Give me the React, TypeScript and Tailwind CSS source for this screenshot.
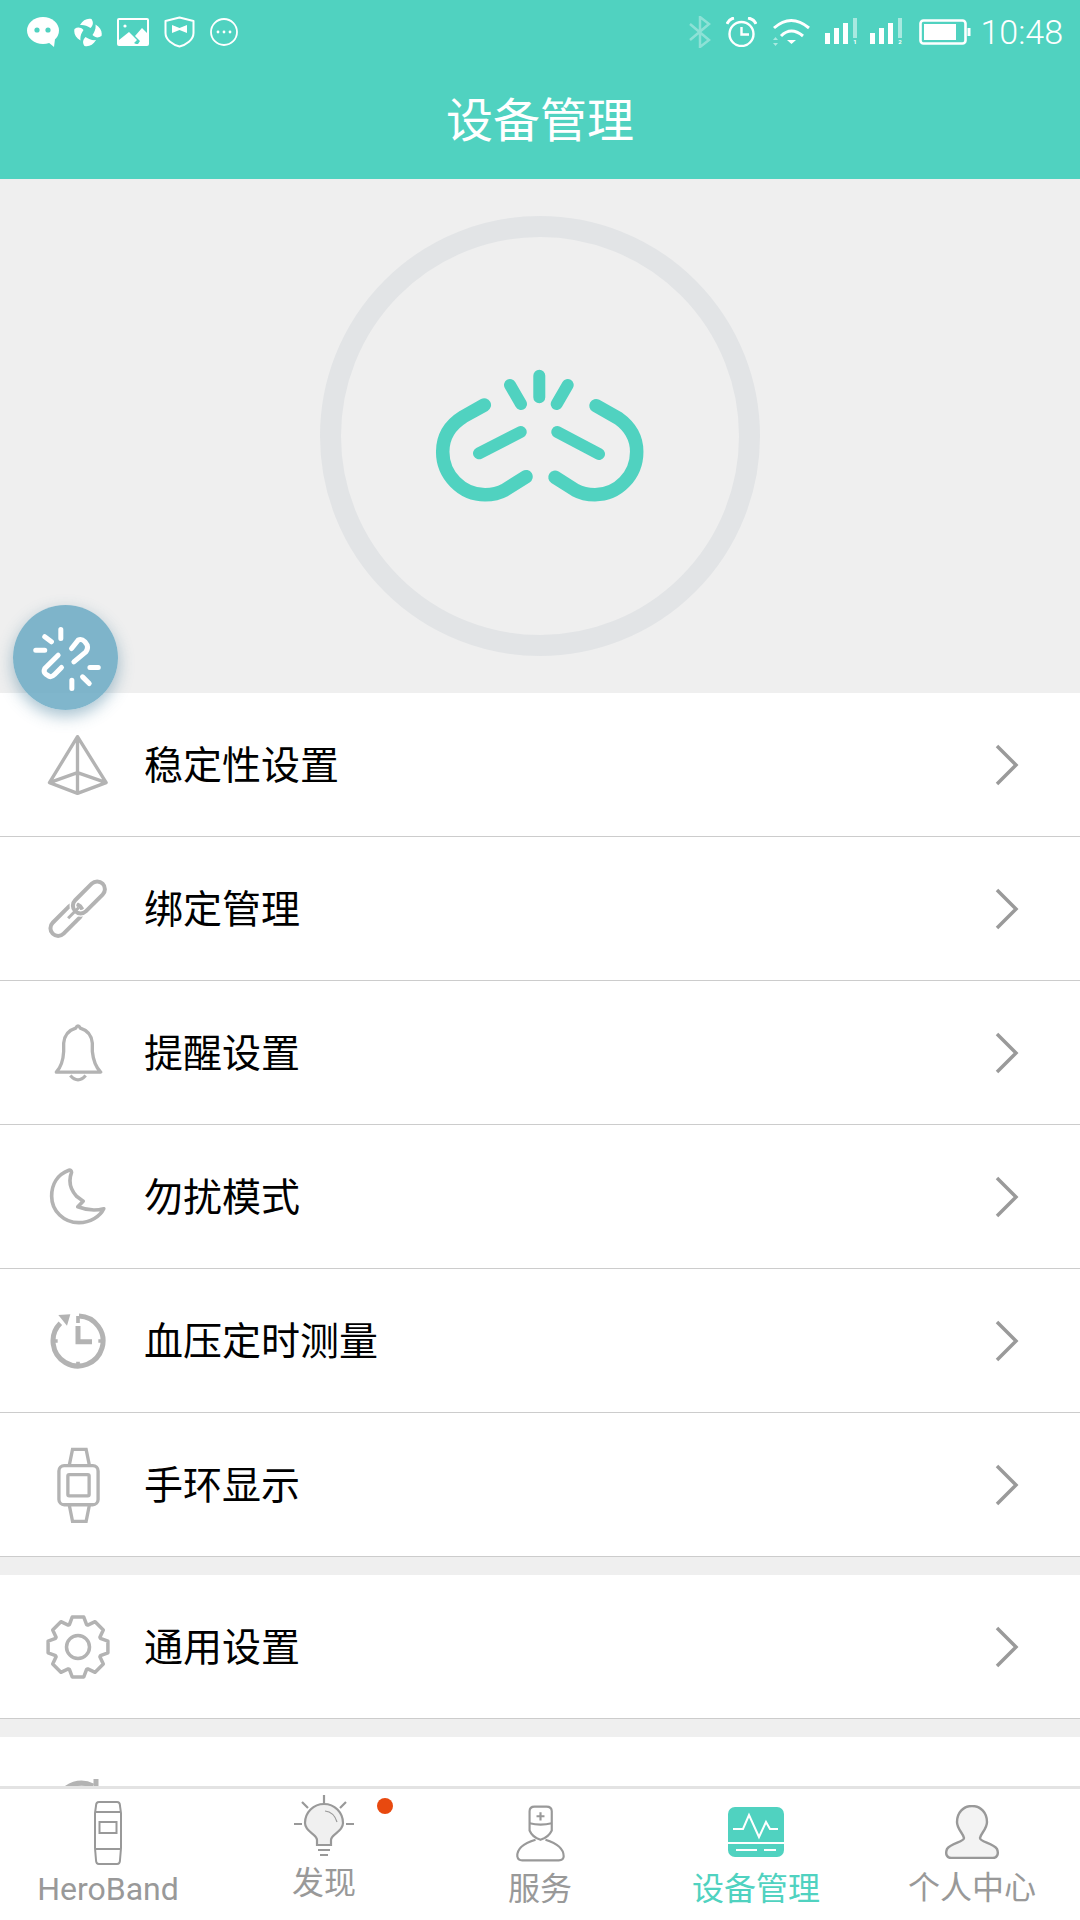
import React from 'react';

const GREY = '#b3b3b3';

const gearPath = () => {
    const pts: string[] = [];
    for (let i = 0; i < 8; i++) {
        const a = i * 45 - 90;
        [[-21, 24], [-11, 30.5], [11, 30.5], [21, 24]].forEach(([d, r]) => {
            const t = ((a + d) * Math.PI) / 180;
            pts.push(`${(34 + r * Math.cos(t)).toFixed(1)} ${(34 + r * Math.sin(t)).toFixed(1)}`);
        });
    }
    return 'M' + pts.join(' L') + ' Z';
};

const Pyramid = () => (
    <svg width="62" height="60" viewBox="145 435 185 180" fill="none" stroke={GREY} strokeWidth="10" strokeLinejoin="round">
        <path d="M236 440 L152 578 L236 610 L322 578 Z M152 578 L236 548 L322 578 M236 440 V610" />
    </svg>
);

const Chain = () => (
    <svg width="62" height="62" viewBox="145 865 185 185" fill="none" stroke={GREY} strokeWidth="12">
        <rect x="145" y="967" width="116" height="46" rx="23" transform="rotate(-45 203 990)" />
        <rect x="212" y="900" width="116" height="46" rx="23" transform="rotate(-45 270 923)" stroke="white" strokeWidth="20" />
        <rect x="212" y="900" width="116" height="46" rx="23" transform="rotate(-45 270 923)" />
        <path d="M208 985 L240 953" strokeWidth="9" />
    </svg>
);

const Bell = () => (
    <svg width="50" height="62" viewBox="160 62 150 185" fill="none" stroke={GREY} strokeWidth="10" strokeLinejoin="round">
        <path d="M170 212 Q190 190 192 150 L192 125 Q195 90 228 80 Q235 66 242 80 Q275 90 278 125 L278 150 Q282 190 303 212 Z" />
        <path d="M212 222 Q235 248 258 222" />
    </svg>
);

const Moon = () => (
    <svg width="58" height="58" viewBox="145 505 175 175" fill="none" stroke={GREY} strokeWidth="11" strokeLinejoin="round">
        <path d="M205 512 C170 525 153 555 153 590 C153 635 190 670 235 670 C270 670 300 650 310 628 C295 632 265 635 232 622 L248 605 L228 590 C205 565 205 540 213 518 Q212 510 205 512 Z" />
    </svg>
);

const Clock = () => (
    <svg width="60" height="60" viewBox="55 60 180 180" fill="none" stroke={GREY}>
        <path d="M148 75 A75 75 0 1 1 92 97" strokeWidth="15" />
        <path d="M86 72 L122 70 L112 104 Z" fill={GREY} stroke="none" />
        <path d="M145 105 V152 H187" strokeWidth="15" />
        <path d="M145 75 V96 M145 212 V225 M72 150 H84 M206 150 H220" strokeWidth="11" />
    </svg>
);

const Watch = () => (
    <svg width="47" height="78" viewBox="75 465 140 235" fill="none" stroke={GREY} strokeWidth="10">
        <rect x="86" y="524" width="118" height="118" rx="16" />
        <rect x="113" y="551" width="64" height="64" rx="4" />
        <path d="M117 524 L127 475 H168 L178 524 M117 642 L127 692 H168 L178 642" />
    </svg>
);

const Gear = () => (
    <svg width="68" height="68" viewBox="0 0 68 68" fill="none" stroke={GREY} strokeWidth="3.5" strokeLinejoin="round">
        <path d={gearPath()} />
        <circle cx="34" cy="34" r="11.5" />
    </svg>
);

const Partial = () => (
    <svg width="68" height="60" viewBox="0 0 68 60" fill="none" stroke={GREY} strokeWidth="5">
        <path d="M21 10 Q35 0 49 7" />
        <path d="M52 0 V10" strokeLinecap="round" />
    </svg>
);

const Chevron = () => (
    <svg width="26" height="44" viewBox="0 0 26 44" fill="none" stroke="#9a9a9a" strokeWidth="3.5">
        <path d="M3 3 L22 22 L3 41" />
    </svg>
);

const Row = ({ icon, label }: { icon: React.ReactNode; label?: string }) => (
    <div className="flex h-[144px] shrink-0 items-center border-b border-[#cccccc] bg-white pl-[44px] pr-[60px]">
        <div className="flex w-[68px] items-center justify-center">{icon}</div>
        <span className="ml-[32px] flex-1 pt-[2px] text-[39px] leading-[52px] text-black">{label}</span>
        {label && <Chevron />}
    </div>
);

const WeChat = () => (
    <svg width="32" height="30" viewBox="0 0 32 30" fill="white">
        <ellipse cx="16" cy="13.5" rx="16" ry="13.5" />
        <path d="M21 25 L27 30 L28 22 Z" />
        <circle cx="10" cy="13" r="2.6" fill="#50d2c0" />
        <circle cx="21" cy="13" r="2.6" fill="#50d2c0" />
    </svg>
);

const PETAL = 'M6 7 C9 2 13 0 17.5 1 C19.5 4 19.5 7 16.5 10 C13 7.5 9.5 6.5 6 7 Z';

const Shutter = () => (
    <svg width="28" height="29" viewBox="0 0 28 29" fill="white">
        <path d={PETAL} />
        <path d={PETAL} transform="rotate(90 14 14.5)" />
        <path d={PETAL} transform="rotate(180 14 14.5)" />
        <path d={PETAL} transform="rotate(270 14 14.5)" />
    </svg>
);

const Picture = () => (
    <svg width="32" height="28" viewBox="0 0 32 28">
        <rect x="1" y="1" width="30" height="26" rx="1" fill="none" stroke="white" strokeWidth="2" />
        <path d="M2 26 V22 L12 14 L20 22 L17 25 L19 26 Z M18 18 L25 10 L30 15 V26 H21 L23 23 Z" fill="white" />
        <circle cx="8" cy="8" r="1.6" fill="white" />
    </svg>
);

const Shield = () => (
    <svg width="31" height="32" viewBox="0 0 31 32">
        <path d="M15.5 1.5 L29.5 5 V17 C29.5 24 22 29 15.5 30.5 C9 29 1.5 24 1.5 17 V5 Z" fill="none" stroke="white" strokeWidth="2" strokeLinejoin="round" />
        <path d="M8 9 L15.5 12 L23 9 V17 L15.5 14 L8 17 Z" fill="white" />
    </svg>
);

const MoreDots = () => (
    <svg width="28" height="28" viewBox="0 0 28 28">
        <circle cx="14" cy="14" r="13" fill="none" stroke="white" strokeWidth="1.8" />
        <circle cx="8" cy="14" r="1.4" fill="white" />
        <circle cx="14" cy="14" r="1.4" fill="white" />
        <circle cx="20" cy="14" r="1.4" fill="white" />
    </svg>
);

const Bluetooth = () => (
    <svg width="22" height="32" viewBox="0 0 22 32" fill="none" stroke="white" strokeWidth="2.5" opacity="0.35">
        <path d="M1 8 L20 24 L11 31 V1 L20 8 L1 24" />
    </svg>
);

const Alarm = () => (
    <svg width="31" height="30" viewBox="0 0 31 30" fill="none" stroke="white" strokeWidth="2.4">
        <circle cx="15.5" cy="17" r="12" />
        <path d="M15.5 10 V17.5 H23" />
        <path d="M1 7 Q3 2 8 1 M22 1 Q28 2 30 7" strokeWidth="3" />
    </svg>
);

const Wifi = () => (
    <svg width="37" height="28" viewBox="0 0 37 28" fill="none" stroke="white" strokeWidth="3">
        <path d="M1 10 Q18 -5 36 10" />
        <path d="M8 18 Q18 8 30 18" />
        <path d="M14 22 H23 L18.5 26 Z" fill="white" stroke="none" />
        <path d="M0 22 H5 L2.5 19 Z M0 25 H5 L2.5 28 Z" fill="white" stroke="none" opacity="0.5" />
    </svg>
);

const Signal = ({ sim }: { sim: string }) => (
    <svg width="33" height="28" viewBox="0 0 33 28" fill="white">
        <rect x="0" y="15" width="5" height="11" />
        <rect x="9" y="10" width="5" height="16" />
        <rect x="18" y="5" width="5" height="21" />
        <rect x="28" y="0" width="4" height="20" opacity="0.5" />
        <text x="30" y="26" fontSize="6" textAnchor="middle" fontWeight="700">{sim}</text>
    </svg>
);

const Battery = () => (
    <svg width="52" height="26" viewBox="0 0 52 26">
        <rect x="1.5" y="1.5" width="45" height="23" rx="3" fill="none" stroke="white" strokeWidth="2.6" />
        <rect x="5" y="5" width="32" height="16" fill="white" />
        <rect x="48.5" y="9" width="3" height="8" fill="white" />
    </svg>
);

const Broken = () => (
    <svg width="220" height="144" viewBox="430 364 220 144" fill="none" stroke="#50d2c0" strokeWidth="13.5" strokeLinecap="round">
        <path d="M484.3 405 L463.3 416.7 C450 425 442.7 436.7 442.7 451.7 C442.7 475 461.7 494.7 485 494.7 C493.3 494.7 500 492.7 505 490 L526 476.7" />
        <path d="M596 405.7 L618.3 418.3 C630 426.7 636.7 438.3 636.7 451.7 C636.7 475 618.3 494.7 595 494.7 C586.7 494.7 580 492.7 575 490 L555 477.3" />
        <path d="M479 453.3 L520.7 432 M557.3 432 L599 454" strokeWidth="12" />
        <path d="M510 385 L521 404 M539.3 375.7 V397.3 M567.7 385 L556.7 404" strokeWidth="12" />
    </svg>
);

const FabLink = () => (
    <svg width="105" height="105" viewBox="40 45 314 314" fill="none" stroke="white" strokeWidth="15" strokeLinecap="round" strokeLinejoin="round">
        <path d="M108 180 H135 M135 140 L155 155 M183 118 V145 M270 232 H295 M248 260 L268 280 M216 270 V295" />
        <path d="M215 175 L235 150 Q245 145 255 155 L262 165 Q265 175 258 185 L222 215" />
        <path d="M175 195 L135 235 Q130 245 138 252 L148 258 Q155 262 165 252 L185 232" />
    </svg>
);

const NAV = '#999999';

const BandIcon = () => (
    <svg width="28" height="64" viewBox="0 0 28 64" fill="none" stroke={NAV} strokeWidth="2">
        <path d="M5 1 H23 Q26 1 26 5 L27 12 V47 L26 59 Q26 63 23 63 H5 Q2 63 2 59 L1 47 V12 L2 5 Q2 1 5 1 Z" />
        <path d="M1 11 H27 M1 48 H27" />
        <rect x="5.5" y="21" width="17" height="11" />
    </svg>
);

const BulbIcon = () => (
    <svg width="68" height="74" viewBox="0 0 68 74" fill="none" stroke={NAV} strokeWidth="2.2">
        <path d="M27 50 C27 44 15 42 15 33 A19 19 0 1 1 53 33 C53 42 41 44 41 50 L41 55 H27 Z" fill="#f0f0f0" />
        <path d="M35 21 Q44 22 47 32" strokeWidth="1.2" />
        <path d="M34 5 V13 M4 34 H12 M56 34 H64 M12 12 L18 18 M56 12 L50 18 M28 60 H40 M30 65 H38" />
    </svg>
);

const NurseIcon = () => (
    <svg width="53" height="62" viewBox="100 65 160 185" fill="none" stroke={NAV} strokeWidth="6.5">
        <path d="M147 130 V92 Q147 78 162 78 H198 Q214 78 214 92 V130" />
        <path d="M147 128 Q180 136 214 128" />
        <path d="M147 130 V150 Q155 170 180 178 Q205 170 214 150 V130" />
        <path d="M165 178 Q108 195 110 228 Q112 240 125 240 H235 Q250 240 250 228 Q250 195 195 178" />
        <path d="M180 95 V120 M168 107 H192" />
    </svg>
);

const DeviceIcon = () => (
    <svg width="56" height="50" viewBox="0 0 56 50" fill="none">
        <rect width="56" height="50" rx="7" fill="#50d2c0" />
        <path d="M5 22 H15 L21 8 L31 30 L38 15 L42 22 H50 M0 36 H56 M8 43 H29 M36 43 H48" stroke="white" strokeWidth="2" />
    </svg>
);

const PersonIcon = () => (
    <svg width="54" height="54" viewBox="0 0 54 54" fill="#f3f3f3" stroke={NAV} strokeWidth="2.4">
        <path d="M27 1 C36 1 42 8 42 17 C42 24 36 28 35 33 C35 37 48 38 52 44 C54 49 52 53 48 53 H6 C2 53 0 49 2 44 C6 38 19 37 19 33 C18 28 12 24 12 17 C12 8 18 1 27 1 Z" />
    </svg>
);

const App = () => {
    return (
        <div className="relative flex h-[1920px] w-[1080px] flex-col overflow-hidden bg-[#efefef] font-['Roboto','Noto_Sans_CJK_SC',sans-serif]">
            <header className="shrink-0 bg-[#50d2c0] text-white">
                <div className="flex h-[64px] items-center justify-between pl-[27px] pr-[17px]">
                    <div className="flex items-center gap-[15px]">
                        <WeChat />
                        <Shutter />
                        <Picture />
                        <Shield />
                        <MoreDots />
                    </div>
                    <div className="flex items-center">
                        <Bluetooth />
                        <div className="ml-[15px]"><Alarm /></div>
                        <div className="ml-[16px]"><Wifi /></div>
                        <div className="ml-[15px]"><Signal sim="1" /></div>
                        <div className="ml-[12px]"><Signal sim="2" /></div>
                        <div className="ml-[16px]"><Battery /></div>
                        <span className="ml-[9px] text-[34px] font-light leading-[40px]">10:48</span>
                    </div>
                </div>
                <h1 className="flex h-[115px] items-center justify-center text-[47px] font-normal">设备管理</h1>
            </header>

            <main className="flex min-h-0 flex-1 flex-col overflow-hidden">
                <section className="flex h-[514px] shrink-0 items-center justify-center">
                    <div className="flex h-[440px] w-[440px] items-center justify-center rounded-full border-[21px] border-[#e2e4e6]">
                        <Broken />
                    </div>
                </section>
                <Row icon={<Pyramid />} label="稳定性设置" />
                <Row icon={<Chain />} label="绑定管理" />
                <Row icon={<Bell />} label="提醒设置" />
                <Row icon={<Moon />} label="勿扰模式" />
                <Row icon={<Clock />} label="血压定时测量" />
                <Row icon={<Watch />} label="手环显示" />
                <div className="h-[18px] shrink-0" />
                <Row icon={<Gear />} label="通用设置" />
                <div className="h-[18px] shrink-0" />
                <Row icon={<Partial />} />
            </main>

            <nav className="grid h-[134px] shrink-0 grid-cols-5 border-t-[3px] border-[#e3e3e3] bg-white text-[32px] leading-[40px] text-[#999999]">
                <div className="flex flex-col items-center pt-[12px]">
                    <BandIcon />
                    <span className="mt-[4px]">HeroBand</span>
                </div>
                <div className="relative flex flex-col items-center pt-px">
                    <BulbIcon />
                    <span className="-mt-px">发现</span>
                    <span className="absolute left-[161px] top-[9px] h-[16px] w-[16px] rounded-full bg-[#e8490f]" />
                </div>
                <div className="flex flex-col items-center pt-[13px]">
                    <NurseIcon />
                    <span className="mt-[5px]">服务</span>
                </div>
                <div className="flex flex-col items-center pt-[18px]">
                    <DeviceIcon />
                    <span className="mt-[12px] text-[#50d2c0]">设备管理</span>
                </div>
                <div className="flex flex-col items-center pt-[16px]">
                    <PersonIcon />
                    <span className="mt-[9px]">个人中心</span>
                </div>
            </nav>

            <div className="absolute left-[13px] top-[605px] flex h-[105px] w-[105px] items-center justify-center rounded-full bg-[#6aa9c3]/85 shadow-[0_6px_16px_rgba(60,120,150,0.45)]">
                <FabLink />
            </div>
        </div>
    );
};

export default App;
